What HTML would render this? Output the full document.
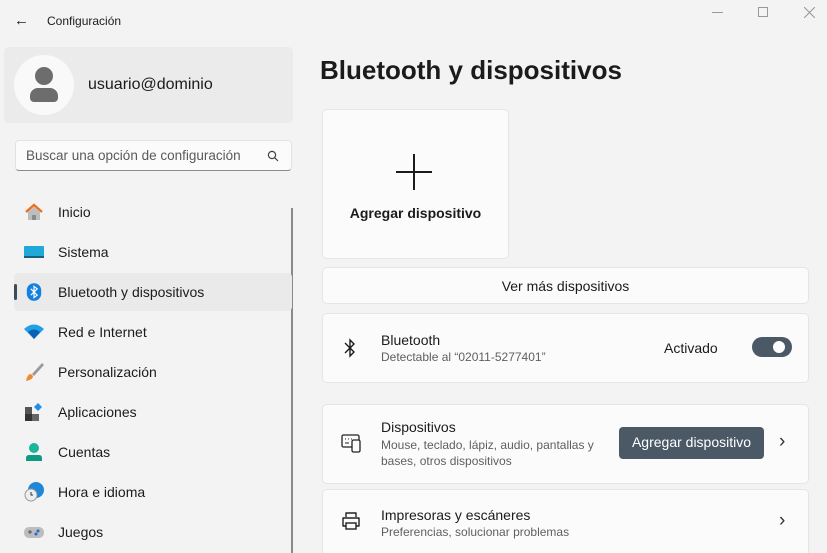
<!DOCTYPE html>
<html><head><meta charset="utf-8"><style>
*{margin:0;padding:0;box-sizing:border-box}
html,body{width:827px;height:553px;overflow:hidden}
body{background:#f3f3f3;font-family:"Segoe UI","Liberation Sans",sans-serif;color:#1b1b1b;position:relative}
.a{position:absolute}
.card{position:absolute;background:#fbfbfb;border:1px solid #e5e5e5;border-radius:5px}
.nav{position:absolute;left:14px;width:278px;height:38px;font-size:14px;line-height:38px;padding-left:44px}
.nav .ic{position:absolute;left:10px;top:10px;width:20px;height:18px}
.sub{font-size:12px;color:#5f5f5f}
</style></head><body>
<div class="a" style="left:14px;top:12px;font-size:15px">←</div>
<div class="a" style="left:47px;top:14px;font-size:12px">Configuración</div>
<div class="a" style="left:712px;top:12px;width:11px;height:1px;background:#999"></div>
<div class="a" style="left:758px;top:7px;width:10px;height:10px;border:1px solid #999"></div>
<svg class="a" style="left:804px;top:7px" width="11" height="11"><path d="M0 0L11 11M11 0L0 11" stroke="#999" stroke-width="1.1"/></svg>

<div class="a" style="left:4px;top:47px;width:289px;height:76px;background:#ebebeb;border-radius:5px"></div>
<div class="a" style="left:14px;top:55px;width:60px;height:60px;border-radius:50%;background:#f9f9f9"></div>
<div class="a" style="left:35px;top:67px;width:18px;height:18px;border-radius:50%;background:#6d6d6d"></div>
<div class="a" style="left:30px;top:88px;width:28px;height:14px;border-radius:8px 8px 4px 4px;background:#6d6d6d"></div>
<div class="a" style="left:88px;top:76px;font-size:16px">usuario@dominio</div>

<div class="a" style="left:15px;top:140px;width:277px;height:31px;background:#fbfbfb;border:1px solid #e2e2e2;border-bottom:1px solid #8a8a8a;border-radius:4px"></div>
<div class="a" style="left:26px;top:148px;font-size:13.5px;color:#5a5a5a">Buscar una opción de configuración</div>
<svg class="a" style="left:267px;top:150px" width="12" height="12" viewBox="0 0 12 12"><circle cx="5" cy="5" r="3.6" fill="none" stroke="#444" stroke-width="1.2"/><path d="M7.6 7.6L11 11" stroke="#444" stroke-width="1.2"/></svg>

<div class="a" style="left:291px;top:208px;width:2px;height:345px;background:#8a8a8a"></div>

<div class="nav" style="top:193px"><svg class="ic" viewBox="0 0 20 18"><path d="M2 9L10 2l8 7" fill="none" stroke="#e8731f" stroke-width="2.4"/><path d="M4 9v8h12V9l-6-5z" fill="#bdbdbd"/><rect x="8" y="12" width="4" height="5" fill="#8a8a8a"/></svg>Inicio</div>
<div class="nav" style="top:233px"><svg class="ic" viewBox="0 0 20 18"><rect x="0" y="3" width="20" height="12" rx="1" fill="#1fa8d8"/><rect x="0" y="13" width="20" height="2" fill="#17617e"/></svg>Sistema</div>
<div class="nav" style="top:273px;background:#eaeaea;border-radius:4px"><div class="a" style="left:0;top:11px;width:3px;height:16px;border-radius:2px;background:#3e4a55"></div><svg class="ic" viewBox="0 0 20 22" style="left:12px;top:8px;width:16px;height:22px"><rect x="1" y="0" width="18" height="22" rx="9" fill="#1480e0"/><path d="M6 7l8 8-4 3V4l4 3-8 8" fill="none" stroke="#fff" stroke-width="1.5"/></svg>Bluetooth y dispositivos</div>
<div class="nav" style="top:313px"><svg class="ic" viewBox="0 0 20 18"><path d="M0 6Q10-3 20 6L10 16z" fill="#1fa0e8"/><path d="M4 9Q10 4 16 9L10 16z" fill="#0f5fb0"/></svg>Red e Internet</div>
<div class="nav" style="top:353px"><svg class="ic" viewBox="0 0 20 18"><path d="M18 0L8 11l2 2L20 2z" fill="#9a9a9a"/><path d="M7 11c-3 0-4 3-5 7 4-1 7-2 7-5z" fill="#f08a30"/></svg>Personalización</div>
<div class="nav" style="top:393px"><svg class="ic" viewBox="0 0 20 18"><rect x="1" y="4" width="7" height="7" fill="#555"/><rect x="1" y="11" width="7" height="7" fill="#333"/><rect x="8" y="11" width="7" height="7" fill="#666"/><path d="M14 0l4 4-4 4-4-4z" fill="#1e90e8"/></svg>Aplicaciones</div>
<div class="nav" style="top:433px"><svg class="ic" viewBox="0 0 20 18"><circle cx="10" cy="5" r="5" fill="#1bb59a"/><path d="M2 18v-3q0-3 3-3h10q3 0 3 3v3z" fill="#0f9a84"/></svg>Cuentas</div>
<div class="nav" style="top:473px"><svg class="ic" viewBox="0 0 20 20" style="height:20px;top:9px"><circle cx="12" cy="8" r="8" fill="#1e88d8"/><circle cx="7" cy="13" r="6" fill="#eee" stroke="#999"/><path d="M7 10v3h2" stroke="#333" fill="none"/></svg>Hora e idioma</div>
<div class="nav" style="top:513px"><svg class="ic" viewBox="0 0 20 18"><rect x="0" y="4" width="20" height="11" rx="5" fill="#bdbdbd"/><circle cx="14" cy="8" r="1.5" fill="#1e6fd0"/><circle cx="12" cy="11" r="1.5" fill="#1e6fd0"/><path d="M4 9h4M6 7v4" stroke="#555"/></svg>Juegos</div>

<div class="a" style="left:320px;top:55px;font-size:26px;font-weight:600">Bluetooth y dispositivos</div>

<div class="card" style="left:322px;top:109px;width:187px;height:150px"></div>
<svg class="a" style="left:394px;top:152px" width="40" height="40"><path d="M20 2v36M2 20h36" stroke="#1b1b1b" stroke-width="2"/></svg>
<div class="a" style="left:322px;top:205px;width:187px;text-align:center;font-size:14px;font-weight:600">Agregar dispositivo</div>

<div class="card" style="left:322px;top:267px;width:487px;height:37px;text-align:center;line-height:36px;font-size:14px">Ver más dispositivos</div>

<div class="card" style="left:322px;top:313px;width:487px;height:70px"></div>
<svg class="a" style="left:343px;top:337px" width="14" height="22" viewBox="0 0 14 22"><path d="M2 6l9 9-4 4V3l4 4-9 9" fill="none" stroke="#1b1b1b" stroke-width="1.4"/></svg>
<div class="a" style="left:381px;top:332px;font-size:14px">Bluetooth</div>
<div class="a sub" style="left:381px;top:350px">Detectable al “02011-5277401”</div>
<div class="a" style="left:664px;top:340px;font-size:14px">Activado</div>
<div class="a" style="left:752px;top:337px;width:40px;height:20px;border-radius:10px;background:#4a5965"></div>
<div class="a" style="left:773px;top:341px;width:12px;height:12px;border-radius:50%;background:#fff"></div>

<div class="card" style="left:322px;top:404px;width:487px;height:80px"></div>
<svg class="a" style="left:341px;top:434px" width="22" height="20" viewBox="0 0 22 20"><rect x="1" y="1" width="17" height="12" rx="1.5" fill="none" stroke="#222" stroke-width="1.3"/><rect x="11" y="6" width="8" height="12" rx="1.5" fill="#fbfbfb" stroke="#222" stroke-width="1.3"/><path d="M4 5h1M7 5h1M10 5h1M4 9h4" stroke="#222"/></svg>
<div class="a" style="left:381px;top:419px;font-size:14px">Dispositivos</div>
<div class="a sub" style="left:381px;top:437px;line-height:16px">Mouse, teclado, lápiz, audio, pantallas y<br>bases, otros dispositivos</div>
<div class="a" style="left:619px;top:427px;width:145px;height:32px;border-radius:4px;background:#4a5965;color:#fff;font-size:14px;text-align:center;line-height:31px">Agregar dispositivo</div>
<div class="a" style="left:779px;top:431px;font-size:19px;color:#333">›</div>

<div class="card" style="left:322px;top:489px;width:487px;height:80px"></div>
<svg class="a" style="left:341px;top:512px" width="20" height="18" viewBox="0 0 20 18"><path d="M5 5V1h10v4M5 14H2V6h16v8h-3" fill="none" stroke="#222" stroke-width="1.4" stroke-linejoin="round"/><rect x="5" y="11" width="10" height="6" fill="none" stroke="#222" stroke-width="1.4"/></svg>
<div class="a" style="left:381px;top:507px;font-size:14px">Impresoras y escáneres</div>
<div class="a sub" style="left:381px;top:525px">Preferencias, solucionar problemas</div>
<div class="a" style="left:779px;top:510px;font-size:19px;color:#333">›</div>
</body></html>
